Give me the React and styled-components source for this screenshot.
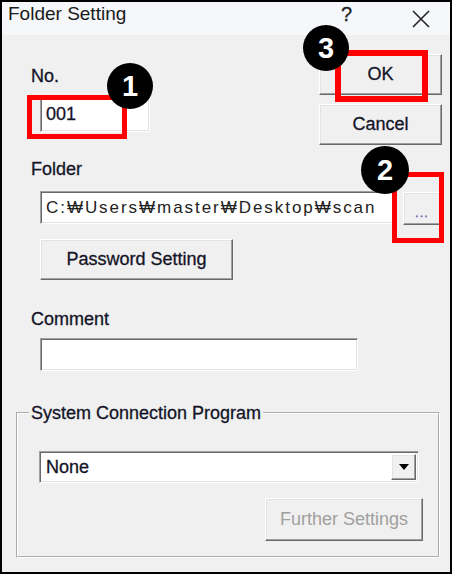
import React from "react";
import styled, { createGlobalStyle } from "styled-components";

const GlobalStyle = createGlobalStyle`
  html, body {
    margin: 0;
    padding: 0;
    background: #f0f0f0;
  }
  * {
    box-sizing: border-box;
  }
`;

const FONT = `"Liberation Sans", "Noto Sans CJK KR", Arial, sans-serif`;

function Dialog() {
  return (
    <Window>
      <TitleBar>
        <Title>Folder Setting</Title>
        <Help>?</Help>
        <CloseIcon width="20" height="20" viewBox="0 0 20 20">
          <path d="M2 2 L18 18 M18 2 L2 18" stroke="#222" strokeWidth="1.6" fill="none" />
        </CloseIcon>
      </TitleBar>

      <Body>
        <TopSection>
          <NoBlock>
            <Label>No.</Label>
            <Input $width={110} $height={35}>001</Input>
          </NoBlock>
          <ButtonStack>
            <Button $width={123} $height={41}>OK</Button>
            <Button $width={123} $height={41}>Cancel</Button>
          </ButtonStack>
        </TopSection>

        <Label $top={14}>Folder</Label>
        <FolderRow>
          <Input $width={354} $height={33}>
            <PathText>C:₩Users₩master₩Desktop₩scan</PathText>
          </Input>
          <BrowseButton>...</BrowseButton>
        </FolderRow>

        <Button $width={193} $height={41} $left={24} $top={14}>
          Password Setting
        </Button>

        <Label $top={29}>Comment</Label>
        <Input $width={318} $height={33} $top={9} />

        <GroupBox>
          <Legend>System Connection Program</Legend>
          <GroupContent>
            <Select>
              <SelectValue>None</SelectValue>
              <ArrowButton>
                <svg width="10" height="6" viewBox="0 0 10 6">
                  <path d="M0 0 H10 L5 6 Z" fill="#000" />
                </svg>
              </ArrowButton>
            </Select>
            <FurtherButton disabled>Further Settings</FurtherButton>
          </GroupContent>
        </GroupBox>
      </Body>

      <Highlight $x={25} $y={93} $w={100} $h={44} $b={5} />
      <Highlight $x={390} $y={170} $w={52} $h={71} $b={5} />
      <Highlight $x={333} $y={48} $w={93} $h={52} $b={6} />

      <Badge $x={105} $y={61}>1</Badge>
      <Badge $x={359} $y={144} $size={48}>2</Badge>
      <Badge $x={301} $y={23}>3</Badge>
    </Window>
  );
}

export default function App() {
  return (
    <>
      <GlobalStyle />
      <Dialog />
    </>
  );
}

const Window = styled.div`
  position: relative;
  width: 452px;
  height: 574px;
  border: 2px solid #000;
  background: #f0f0f0;
  display: flex;
  flex-direction: column;
  font-family: ${FONT};
  color: #111;
  overflow: hidden;
`;

const TitleBar = styled.div`
  height: 33px;
  flex: none;
  display: flex;
  align-items: flex-start;
  padding: 1px 0 0 6px;
  background: #f5f7fb;
`;

const Title = styled.div`
  font-size: 19px;
  line-height: 22px;
  color: #1a1a1a;
  flex: 1;
`;

const Help = styled.div`
  font-size: 20px;
  line-height: 22px;
  color: #222;
  margin-right: 59px;
  -webkit-text-stroke: 0.3px #222;
`;

const CloseIcon = styled.svg`
  margin: 6px 19px 0 0;
`;

const Body = styled.div`
  flex: 1;
  display: flex;
  flex-direction: column;
  align-items: flex-start;
  padding: 0 8px 0 14px;
`;

const TopSection = styled.div`
  align-self: stretch;
  display: flex;
  justify-content: space-between;
  align-items: flex-start;
`;

const NoBlock = styled.div`
  display: flex;
  flex-direction: column;
  align-items: flex-start;
  margin-top: 31px;
`;

const ButtonStack = styled.div`
  display: flex;
  flex-direction: column;
  gap: 9px;
  margin-top: 19px;
`;

const Label = styled.div`
  font-size: 18px;
  line-height: 20px;
  margin: ${(p) => p.$top || 0}px 0 0 15px;
  color: #141428;
  -webkit-text-stroke: 0.3px #141428;
`;

const Input = styled.div`
  width: ${(p) => p.$width}px;
  height: ${(p) => p.$height}px;
  margin: ${(p) => (p.$top === undefined ? 11 : p.$top)}px 0 0 24px;
  background: #fff;
  border: 1px solid;
  border-color: #a0a0a0 #fff #fff #a0a0a0;
  box-shadow: inset 1px 1px #696969, inset -1px -1px #e3e3e3;
  display: flex;
  align-items: center;
  padding-left: 5px;
  font-size: 18px;
  color: #141428;
  -webkit-text-stroke: 0.3px #141428;
  white-space: nowrap;
  overflow: hidden;
`;

const PathText = styled.span`
  font-size: 17px;
  letter-spacing: 1.95px;
  color: #222;
  -webkit-text-stroke: 0;
`;

const FolderRow = styled.div`
  display: flex;
  align-items: flex-start;
  margin-top: 12px;
  gap: 9px;

  & > ${Input} {
    margin: 0 0 0 24px;
  }
`;

const Button = styled.button`
  width: ${(p) => p.$width}px;
  height: ${(p) => p.$height}px;
  margin: ${(p) => p.$top || 0}px 0 0 ${(p) => p.$left || 0}px;
  background: #f0f0f0;
  border: 1px solid;
  border-color: #fff #696969 #696969 #fff;
  box-shadow: inset -1px -1px #a0a0a0, inset 1px 1px #e3e3e3;
  font-family: ${FONT};
  font-size: 18px;
  color: #141428;
  -webkit-text-stroke: 0.3px #141428;
  padding: 0;
  flex: none;
`;

const BrowseButton = styled(Button)`
  width: 38px;
  height: 33px;
  margin-top: 1px;
  font-size: 13px;
  color: #6a5aa8;
  -webkit-text-stroke: 0.3px #6a5aa8;
  padding-top: 7px;
  letter-spacing: 1px;
`;

const GroupBox = styled.fieldset`
  width: 424px;
  margin: 31px 0 0 0;
  padding: 0 0 15px 0;
  border: 2px groove #fff;
  min-width: 0;
`;

const Legend = styled.legend`
  margin-left: 11px;
  padding: 0 2px;
  font-size: 18px;
  line-height: 22px;
  color: #141428;
  -webkit-text-stroke: 0.3px #141428;
`;

const GroupContent = styled.div`
  display: flex;
  flex-direction: column;
  align-items: flex-start;
  padding-top: 27px;
`;

const Select = styled.div`
  width: 380px;
  height: 32px;
  margin-left: 21px;
  background: #fff;
  border: 1px solid;
  border-color: #a0a0a0 #fff #fff #a0a0a0;
  box-shadow: inset 1px 1px #696969, inset -1px -1px #e3e3e3;
  display: flex;
  align-items: stretch;
  padding: 2px 2px 2px 0;
`;

const SelectValue = styled.div`
  flex: 1;
  display: flex;
  align-items: center;
  padding-left: 6px;
  font-size: 18px;
  color: #141428;
  -webkit-text-stroke: 0.3px #141428;
`;

const ArrowButton = styled.div`
  width: 25px;
  display: flex;
  align-items: center;
  justify-content: center;
  background: #f0f0f0;
  border: 1px solid;
  border-color: #fff #696969 #696969 #fff;
  box-shadow: inset -1px -1px #a0a0a0, inset 1px 1px #e3e3e3;
`;

const FurtherButton = styled(Button)`
  width: 158px;
  height: 43px;
  align-self: flex-end;
  margin: 15px 15px 0 0;
  color: #a0a0a0;
  -webkit-text-stroke: 0;
`;

const Highlight = styled.div`
  position: absolute;
  left: ${(p) => p.$x}px;
  top: ${(p) => p.$y}px;
  width: ${(p) => p.$w}px;
  height: ${(p) => p.$h}px;
  border: ${(p) => p.$b}px solid #ff0000;
`;

const Badge = styled.div`
  position: absolute;
  left: ${(p) => p.$x}px;
  top: ${(p) => p.$y}px;
  width: ${(p) => p.$size || 46}px;
  height: ${(p) => p.$size || 46}px;
  border-radius: 50%;
  background: #000;
  color: #fff;
  display: flex;
  align-items: center;
  justify-content: center;
  font-family: ${FONT};
  font-weight: 700;
  font-size: 29px;
`;
